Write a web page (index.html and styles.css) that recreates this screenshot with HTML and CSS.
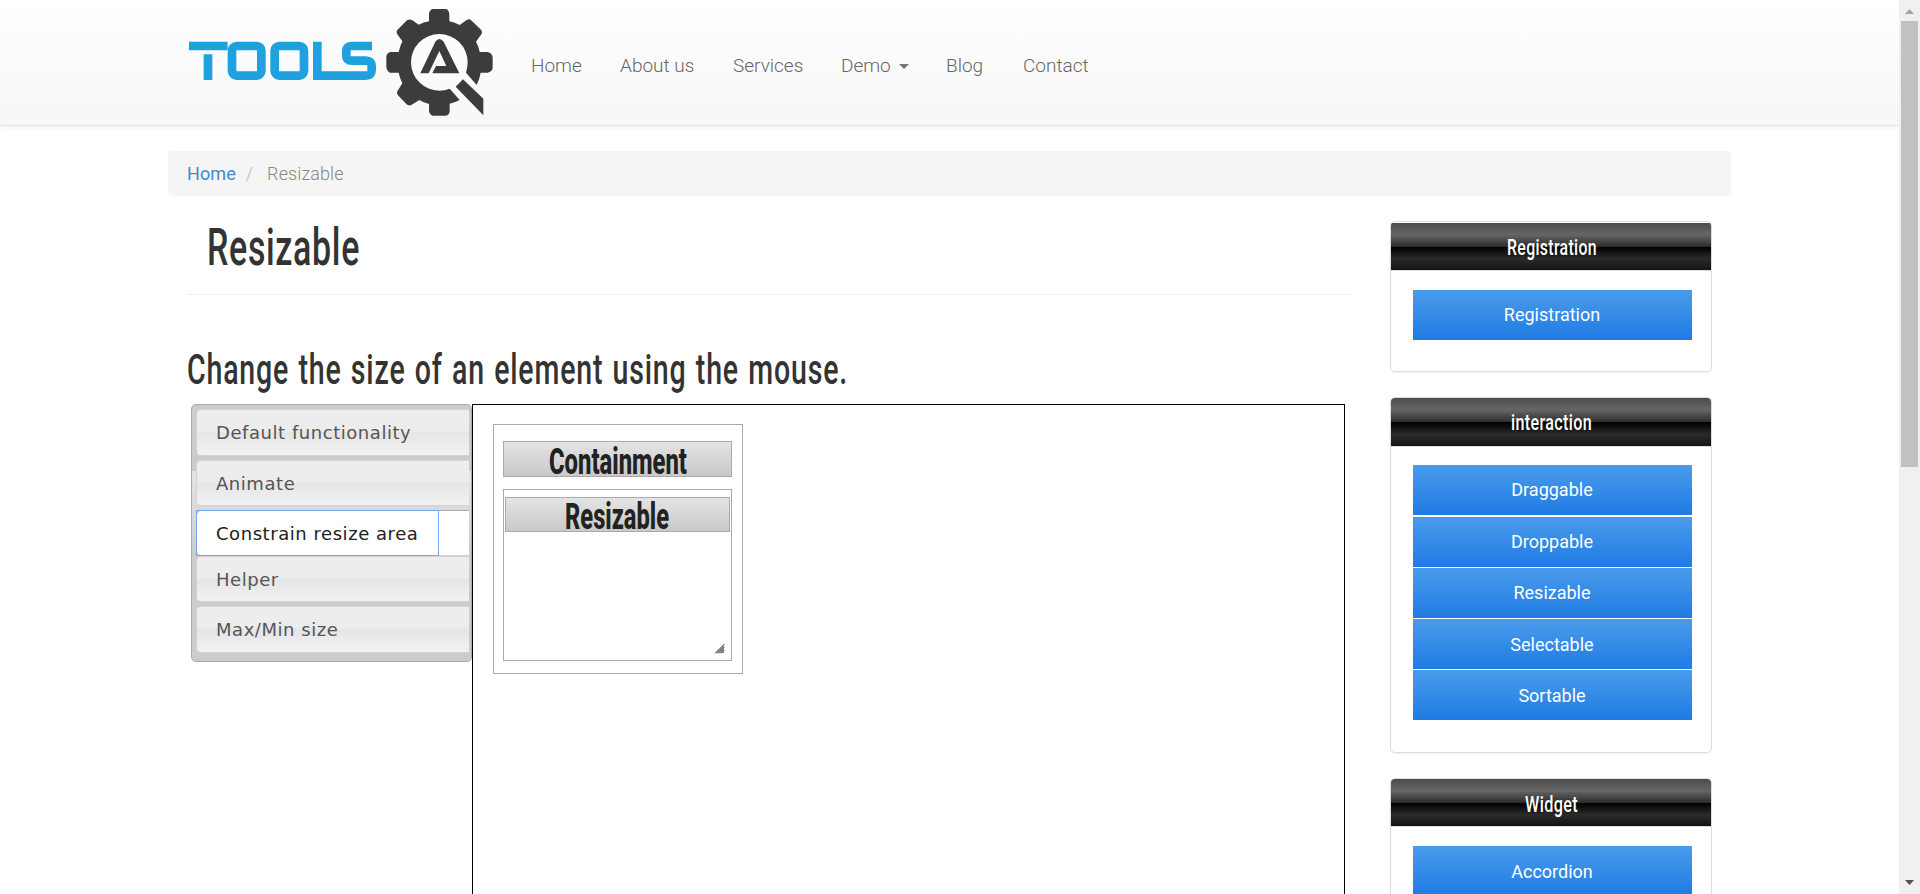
FILE: index.html
```html
<!DOCTYPE html>
<html lang="en">
<head>
<meta charset="utf-8">
<title>Resizable</title>
<link rel="stylesheet" href="styles.css">
</head>
<body>
<div class="window">
<div class="page">
  <header class="navbar">
    <div class="container navbar-inner">
      <svg class="logo" width="310" height="120" viewBox="0 0 1020 360" preserveAspectRatio="none" aria-label="Tools QA">
        <g fill="none" stroke="#1fa1df" stroke-width="26">
          <path d="M57 138H173M114 163V240"/>
          <rect x="186" y="138" width="88" height="89" rx="14"/>
          <rect x="314" y="138" width="88" height="89" rx="14"/>
          <path d="M442 125V227H588Q605 227 605 210V198Q605 182 588 182H546Q529 182 529 167V153Q529 138 546 138H606"/>
        </g>
        <g fill="#3c3c3b">
          <path fill-rule="evenodd" d="M787 27H829Q837 30 838 44V64Q855 68 869 75L890 60Q899 55 905 62L933 89Q939 97 933 104L918 125Q926 139 929 156H953Q966 159 968 172V204Q966 215 953 218H932Q929 237 920 255L888 218Q893 202 893 187A85 85 0 1 0 808 272Q825 272 839 266L869 300Q854 308 839 311V335Q837 345 827 347H788Q779 344 777 333V312Q761 308 748 300L724 315Q715 319 709 312L684 286Q678 279 684 271L697 250Q690 236 686 218H660Q650 212 649 200V170Q650 159 661 156H686Q690 139 697 124L682 103Q677 94 684 88L711 61Q719 56 727 61L746 74Q761 67 777 64V42Q778 31 787 27Z"/>
          <path d="M751 220L796 125Q808 109 821 125L868 220H787L798 198H829L808 153L776 220Z"/>
          <path d="M857 260L879 238L940 296V346Z"/>
        </g>
      </svg>
      <nav class="nav">
        <a class="n1">Home</a><a class="n2">About us</a><a class="n3">Services</a><a class="n4">Demo <i class="caret"></i></a><a class="n5">Blog</a><a class="n6">Contact</a>
      </nav>
    </div>
  </header>
  <div class="container">
    <div class="breadcrumb"><a>Home</a><span class="sep">/</span><span>Resizable</span></div>
    <div class="columns">
      <main class="main">
        <h1><svg width="200" height="73"><text x="20" y="44" font-size="52" textLength="153" lengthAdjust="spacingAndGlyphs">Resizable</text></svg></h1>
        <h2><svg width="700" height="59"><text x="0" y="39" font-size="42" textLength="661" lengthAdjust="spacingAndGlyphs">Change the size of an element using the mouse.</text></svg></h2>
        <div class="demo">
          <ul class="tabs">
            <li class="t1"><a>Default functionality</a></li>
            <li class="t2"><a>Animate</a></li>
            <li class="active t3"><a>Constrain resize area</a></li>
            <li class="t4"><a>Helper</a></li>
            <li class="t5"><a>Max/Min size</a></li>
          </ul>
          <section class="panel">
            <div class="containment">
              <h3 class="bar"><svg width="227" height="35"><text x="45" y="32" font-size="36" textLength="138" lengthAdjust="spacingAndGlyphs">Containment</text></svg></h3>
              <div class="resizable">
                <h3 class="bar"><svg width="223" height="33"><text x="59" y="31" font-size="36" textLength="104" lengthAdjust="spacingAndGlyphs">Resizable</text></svg></h3>
                <svg class="grip" width="10" height="10"><path d="M0 9L9 0V9Z" fill="#8c8c8c"/><path d="M0 9.500L9.500 0M3 9.500L9.500 3M6 9.500L9.500 6" stroke="#707070" fill="none"/></svg>
              </div>
            </div>
          </section>
        </div>
      </main>
      <aside class="side">
        <section class="card first">
          <h4><svg width="320" height="47"><text x="116" y="32" font-size="22.500" textLength="90" lengthAdjust="spacingAndGlyphs">Registration</text></svg></h4>
          <div class="links"><a>Registration</a></div>
        </section>
        <section class="card tall">
          <h4><svg width="320" height="47"><text x="120" y="32" font-size="22.500" textLength="81" lengthAdjust="spacingAndGlyphs">interaction</text></svg></h4>
          <div class="links"><a class="wide-gap">Draggable</a><a>Droppable</a><a>Resizable</a><a class="low">Selectable</a><a class="low">Sortable</a></div>
        </section>
        <section class="card">
          <h4><svg width="320" height="47"><text x="134" y="32.500" font-size="22.500" textLength="53" lengthAdjust="spacingAndGlyphs">Widget</text></svg></h4>
          <div class="links"><a class="low">Accordion</a></div>
        </section>
      </aside>
    </div>
  </div>
</div>
<div class="scrollbar">
  <svg width="21" height="21"><path d="M6 14L10.500 9L15 14Z" fill="#a3a3a3"/></svg>
  <div class="thumb"></div>
  <svg class="down" width="21" height="21"><path d="M6 7H15L10.500 12Z" fill="#505050"/></svg>
</div>
</div>
</body>
</html>
```
FILE: styles.css
```css
* { box-sizing: border-box; }
body { margin: 0; background: #fff; color: #333; font: 300 18px/26px Roboto, sans-serif; }
h1, h2, h3, h4, ul { margin: 0; padding: 0; list-style: none; }
svg { display: block; overflow: visible; }
.window { display: flex; height: 894px; overflow: hidden; }
.page { flex: 1; height: 894px; overflow: hidden; }
.container { width: 1563px; margin: 0 auto; }

.navbar { height: 126px; background: linear-gradient(#fff, #f7f7f7); border-bottom: 1px solid #e4e4e4; box-shadow: 0 1px 5px rgba(0, 0, 0, .08); }
.navbar-inner { display: flex; }
.logo { width: 340px; height: 120px; margin-left: 2px; flex: none; }
.nav { display: flex; padding: 53px 0 0 21px; color: #666; white-space: nowrap; }
.nav a { font-size: 19px; letter-spacing: 0; }
.n1 { width: 89px; }
.n2 { width: 113px; }
.n3 { width: 108px; }
.n4 { width: 105px; }
.n5 { width: 77px; }
.caret { display: inline-block; margin-left: 4px; border: 5px solid transparent; border-top-color: #777; border-bottom: 0; vertical-align: middle; }

.breadcrumb { display: flex; height: 45px; margin-top: 25px; padding: 10px 19px; background: #f5f5f5; border-radius: 5px; color: #888; letter-spacing: .1px; }
.breadcrumb a { color: #428bca; font-weight: 400; }
.sep { margin: 0 14px 0 10px; color: #bbb; }

.columns { display: flex; padding: 25px 19px 0; }
.main { width: 1166px; flex: none; }
h1 { border-bottom: 1px solid #eee; font-weight: 500; letter-spacing: 1px; }
h1, h2 { fill: #333; }
h2 { height: 59px; margin-top: 50px; font-weight: 500; letter-spacing: 1.2px; word-spacing: 2px; }
.demo { display: flex; align-items: flex-start; padding-left: 4px; }
.tabs { width: 281px; height: 258px; padding: 4px 2px 0 4px; border: 1px solid #aaa; border-radius: 5px; background: #ccc linear-gradient(#ccc 0 66px, #e5e5e5 66px, #ccc 150px); font: 18px/28px "DejaVu Sans", sans-serif; color: #555; letter-spacing: .55px; white-space: nowrap; }
.tabs li { height: 47px; margin-bottom: 4px; padding: 9px 0 0 19px; border: 1px solid #d3d3d3; border-right: 0; border-radius: 5px 0 0 5px; background: linear-gradient(#eee 0, #ececec 49%, #e5e5e5 50%, #f2f2f2); }
.tabs .active { height: 46px; margin-bottom: 0; padding: 0; background: #fff; color: #212121; border-color: #aaa #aaa #d3d3d3; }
.tabs .active a { display: block; width: 243px; height: 46px; margin: -1px 0 0 -1px; padding: 9px 0 0 19px; border: 1px solid #76a7f5; }
.tabs .t2, .tabs .t4 { height: 46px; }
.panel { width: 873px; height: 900px; padding: 19px 20px; border: 1px solid #000; }
.containment { width: 250px; height: 250px; padding: 16px 10px 0 9px; border: 1px solid #aaa; }
.bar { height: 36px; border: 1px solid #aaa; background: linear-gradient(#e4e4e4, #c9c9c9); color: #222; }
.bar svg { fill: #222; font-weight: 800; }
.resizable { display: flex; flex-direction: column; height: 172px; margin-top: 12px; padding: 7px 1px; border: 1px solid #aaa; }
.resizable .bar { height: 35px; }
.grip { margin: auto 5px -1px auto; }

.side { margin-left: 37px; }
.card { width: 322px; margin-bottom: 25px; border: 1px solid #ddd; border-radius: 5px; box-shadow: 0 1px 2px rgba(0, 0, 0, .06); overflow: hidden; }
h4 { height: 48px; border-bottom: 1px solid #ddd; background: linear-gradient(#4c4c4c 0, #666 25%, #2c2c2c 50%, #000 51%, #2b2b2b 76%, #131313); fill: #fff; font-weight: 500; letter-spacing: .5px; }
.first { padding-top: 1px; }
.links { display: flex; flex-direction: column; gap: 1px; padding: 19px 19px 31px 22px; }
.links a { height: 50px; padding-right: 1px; background: linear-gradient(#4a9bea, #1f7be4); color: #fff; text-align: center; line-height: 49px; font-weight: 400; }
.links .wide-gap { margin-bottom: 1px; }
.links .low { line-height: 51px; }
.tall h4 { height: 49px; }
.tall .links { padding-top: 18px; padding-bottom: 32px; }

.scrollbar { display: flex; flex-direction: column; width: 21px; background: #f0f0f0; }
.thumb { width: 17px; height: 446px; margin-left: 2px; background: #c1c1c1; }
.down { margin-top: auto; }
```
